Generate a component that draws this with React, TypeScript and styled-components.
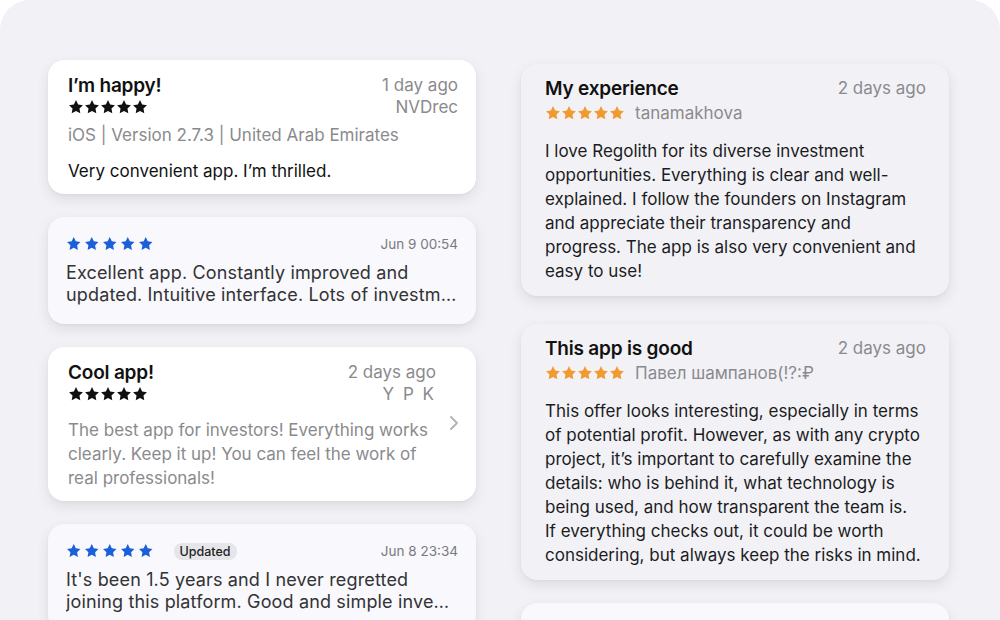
import React from "react";
import styled, { createGlobalStyle } from "styled-components";

const GlobalStyle = createGlobalStyle`
  html, body {
    margin: 0;
    padding: 0;
    background: #ffffff;
  }
  body {
    font-family: Inter, "Noto Sans", "Liberation Sans", sans-serif;
    -webkit-font-smoothing: antialiased;
  }
`;

type StarTone = "black" | "blue" | "orange";

const starColors: Record<StarTone, string> = {
  black: "#111111",
  blue: "#1b5fd9",
  orange: "#f29a2e",
};

const Stars = ({ tone, size, gap }: { tone: StarTone; size: number; gap: number }) => (
  <StarRow $gap={gap}>
    {[0, 1, 2, 3, 4].map((i) => (
      <svg key={i} width={size} height={size} viewBox="0 0 24 24">
        <path
          d="M12 1.6l3.2 6.6 7.2 1-5.2 5.1 1.2 7.2L12 18.1l-6.4 3.4 1.2-7.2L1.6 9.2l7.2-1z"
          fill={starColors[tone]}
        />
      </svg>
    ))}
  </StarRow>
);

const Chevron = () => (
  <svg width="12" height="18" viewBox="0 0 12 18">
    <path d="M3 3l6 6-6 6" fill="none" stroke="#b4b4b8" strokeWidth="2" strokeLinecap="round" strokeLinejoin="round" />
  </svg>
);

export default function App() {
  return (
    <>
      <GlobalStyle />
      <Page>
        <LeftColumn>
          <Card $tone="white">
            <HeadRow>
              <Title>I’m happy!</Title>
              <Muted>1 day ago</Muted>
            </HeadRow>
            <HeadRow>
              <Stars tone="black" size={16} gap={0} />
              <Muted>NVDrec</Muted>
            </HeadRow>
            <Meta>iOS | Version 2.7.3 | United Arab Emirates</Meta>
            <Body $muted={false}>Very convenient app. I’m thrilled.</Body>
          </Card>

          <Card $tone="blue">
            <SmallHead>
              <Stars tone="blue" size={15.5} gap={2.5} />
              <SmallDate>Jun 9 00:54</SmallDate>
            </SmallHead>
            <Preview>Excellent app. Constantly improved and</Preview>
            <PreviewCut>updated. Intuitive interface. Lots of investment options and great support.</PreviewCut>
          </Card>

          <Card $tone="white">
            <WithChevron>
              <div>
                <HeadRow>
                  <Title>Cool app!</Title>
                  <Muted>2 days ago</Muted>
                </HeadRow>
                <HeadRow>
                  <Stars tone="black" size={16} gap={0} />
                  <Muted $spaced>Y P K</Muted>
                </HeadRow>
                <Body $muted>
                  The best app for investors! Everything works clearly. Keep it up! You can feel the work of real professionals!
                </Body>
              </div>
              <ChevronSlot>
                <Chevron />
              </ChevronSlot>
            </WithChevron>
          </Card>

          <Card $tone="blue">
            <SmallHead>
              <Stars tone="blue" size={15.5} gap={2.5} />
              <Pill>Updated</Pill>
              <SmallDate>Jun 8 23:34</SmallDate>
            </SmallHead>
            <Preview>It's been 1.5 years and I never regretted</Preview>
            <PreviewCut>joining this platform. Good and simple investment tools for everyone.</PreviewCut>
          </Card>
        </LeftColumn>

        <RightColumn>
          <Card $tone="grey">
            <HeadRow>
              <Title>My experience</Title>
              <Muted>2 days ago</Muted>
            </HeadRow>
            <AuthorRow>
              <Stars tone="orange" size={16} gap={0} />
              <Muted>tanamakhova</Muted>
            </AuthorRow>
            <LongBody>
              I love Regolith for its diverse investment opportunities. Everything is clear and well-explained. I follow the founders on Instagram and appreciate their transparency and progress. The app is also very convenient and easy to use!
            </LongBody>
          </Card>

          <Card $tone="grey">
            <HeadRow>
              <Title>This app is good</Title>
              <Muted>2 days ago</Muted>
            </HeadRow>
            <AuthorRow>
              <Stars tone="orange" size={16} gap={0} />
              <Muted>Павел шампанов(!?:₽</Muted>
            </AuthorRow>
            <LongBody>
              This offer looks interesting, especially in terms of potential profit. However, as with any crypto project, it’s important to carefully examine the details: who is behind it, what technology is being used, and how transparent the team is. If everything checks out, it could be worth considering, but always keep the risks in mind.
            </LongBody>
          </Card>

          <PeekCard />
        </RightColumn>
      </Page>
    </>
  );
}

const Page = styled.div`
  width: 1000px;
  height: 620px;
  box-sizing: border-box;
  background: #f1f1f6;
  border-radius: 30px 30px 0 0;
  overflow: hidden;
  display: grid;
  grid-template-columns: 428px 428px;
  column-gap: 45px;
  padding: 0 51px 0 48px;
`;

const LeftColumn = styled.div`
  display: flex;
  flex-direction: column;
  gap: 23px;
  padding-top: 60px;
`;

const RightColumn = styled.div`
  display: flex;
  flex-direction: column;
  gap: 23px;
  padding-top: 64px;

  & > :first-child {
    margin-bottom: 5px;
  }
`;

const cardBg = {
  white: "#ffffff",
  blue: "#f8f8fd",
  grey: "#f2f2f6",
};

const cardPadding = {
  white: "14px 18px 11px 20px",
  blue: "17px 18px 18px 18px",
  grey: "13px 23px 13px 24px",
};

const Card = styled.div<{ $tone: "white" | "blue" | "grey" }>`
  flex-shrink: 0;
  background: ${(p) => cardBg[p.$tone]};
  border-radius: 16px;
  box-shadow: 0 5px 14px rgba(0, 0, 0, 0.09), 0 1px 3px rgba(0, 0, 0, 0.04);
  padding: ${(p) => cardPadding[p.$tone]};
  color: #111111;
`;

const PeekCard = styled.div`
  flex-shrink: 0;
  height: 120px;
  background: #f8f8fd;
  border-radius: 16px;
  box-shadow: 0 5px 14px rgba(0, 0, 0, 0.09), 0 1px 3px rgba(0, 0, 0, 0.04);
`;

const HeadRow = styled.div`
  display: flex;
  justify-content: space-between;
  align-items: center;
  height: 22px;
`;

const AuthorRow = styled.div`
  display: flex;
  align-items: center;
  gap: 10px;
  height: 28px;
  margin-bottom: 12px;
`;

const StarRow = styled.div<{ $gap: number }>`
  display: flex;
  gap: ${(p) => p.$gap}px;
`;

const Title = styled.div`
  font-size: 19px;
  font-weight: 600;
  letter-spacing: -0.2px;
  color: #111111;
`;

const Muted = styled.div<{ $spaced?: boolean }>`
  font-size: 17px;
  color: #8a8a8e;
  letter-spacing: ${(p) => (p.$spaced ? "2px" : "0")};
`;

const Meta = styled.div`
  font-size: 17px;
  color: #8a8a8e;
  margin-top: 5px;
  line-height: 24px;
`;

const Body = styled.div<{ $muted: boolean }>`
  font-size: 17px;
  line-height: 24px;
  color: ${(p) => (p.$muted ? "#8a8a8e" : "#111111")};
  margin-top: ${(p) => (p.$muted ? "13px" : "12px")};
`;

const LongBody = styled.div`
  font-size: 17px;
  line-height: 24px;
  color: #1c1c1e;
  padding-right: 5px;
`;

const WithChevron = styled.div`
  display: grid;
  grid-template-columns: 1fr 22px;
`;

const ChevronSlot = styled.div`
  display: flex;
  justify-content: flex-end;
  padding-top: 53px;
  margin-right: -2px;
`;

const SmallHead = styled.div`
  display: flex;
  align-items: center;
  gap: 20px;
  height: 20px;
  margin-bottom: 8px;
`;

const SmallDate = styled.div`
  margin-left: auto;
  font-size: 13.5px;
  color: #7a7a7e;
`;

const Pill = styled.div`
  font-size: 12.5px;
  font-weight: 500;
  color: #222222;
  background: #e6e6ea;
  border-radius: 8px;
  padding: 1px 6px;
`;

const Preview = styled.div`
  font-size: 18px;
  letter-spacing: 0.15px;
  line-height: 22px;
  color: #333333;
  white-space: nowrap;
`;

const PreviewCut = styled(Preview)`
  overflow: hidden;
  text-overflow: ellipsis;
  padding-right: 1px;
`;
